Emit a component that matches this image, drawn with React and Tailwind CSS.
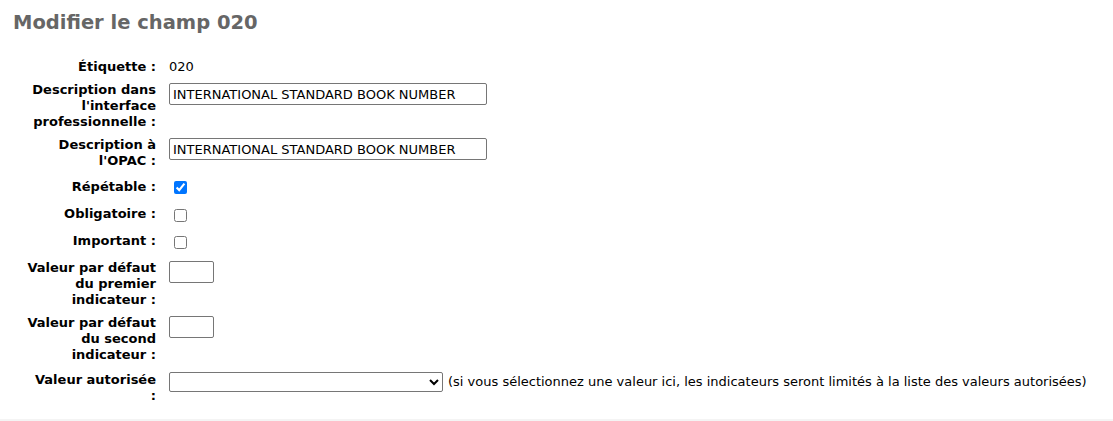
import React from "react";

function Label({ children, className = "" }) {
  return (
    <div className={"w-[130px] shrink-0 text-right font-bold leading-[16px] " + className}>
      {children}
    </div>
  );
}

function TextInput({ value = "", w = "w-[318px]", className = "" }) {
  return (
    <input
      type="text"
      defaultValue={value}
      className={
        "h-[22px] rounded-[2px] border border-[#767676] bg-white px-[3px] text-[13px] leading-[16px] text-black outline-none " +
        w +
        " " +
        className
      }
    />
  );
}

function Check({ checked = false, className = "" }) {
  return (
    <input
      type="checkbox"
      defaultChecked={checked}
      className={"ml-[5px] h-[13px] w-[13px] " + className}
    />
  );
}

export default function App() {
  return (
    <div className="min-h-[421px] bg-white font-['DejaVu_Sans',sans-serif] text-[13px] text-black">
      <h1 className="ml-[13px] pt-[11px] text-[19.5px] font-bold leading-[24px] text-[#666666]">
        Modifier le champ 020
      </h1>

      <div className="flex flex-col pl-[26px]">
        <div className="mt-[24px] flex items-start gap-[13px]">
          <Label>Étiquette :</Label>
          <div className="leading-[16px]">020</div>
        </div>

        <div className="mt-[7px] flex items-start gap-[13px]">
          <Label>
            Description dans l'interface professionnelle :
          </Label>
          <TextInput value="INTERNATIONAL STANDARD BOOK NUMBER" className="mt-[1px]" />
        </div>

        <div className="mt-[7px] flex items-start gap-[13px]">
          <Label>Description à l'OPAC :</Label>
          <TextInput value="INTERNATIONAL STANDARD BOOK NUMBER" className="mt-[1px]" />
        </div>

        <div className="mt-[10px] flex items-start gap-[13px]">
          <Label>Répétable :</Label>
          <Check checked className="mt-[2px]" />
        </div>

        <div className="mt-[11px] flex items-start gap-[13px]">
          <Label>Obligatoire :</Label>
          <Check className="mt-[3px]" />
        </div>

        <div className="mt-[11px] flex items-start gap-[13px]">
          <Label>Important :</Label>
          <Check className="mt-[3px]" />
        </div>

        <div className="mt-[11px] flex items-start gap-[13px]">
          <Label>Valeur par défaut du premier indicateur :</Label>
          <TextInput w="w-[45px]" className="mt-[1px]" />
        </div>

        <div className="mt-[7px] flex items-start gap-[13px]">
          <Label>Valeur par défaut du second indicateur :</Label>
          <TextInput w="w-[45px]" className="mt-[1px]" />
        </div>

        <div className="mt-[9px] flex items-start gap-[13px]">
          <Label>Valeur autorisée :</Label>
          <div className="flex items-center gap-[5px]">
            <select className="h-[20px] w-[274px] rounded-[2px] border border-[#767676] bg-white text-[13px]">
              <option value=""></option>
            </select>
            <span className="leading-[16px]">
              (si vous sélectionnez une valeur ici, les indicateurs seront limités à la liste des valeurs autorisées)
            </span>
          </div>
        </div>
      </div>

      <div className="mt-[15px] h-[2px] bg-[#f4f4f4]" />
    </div>
  );
}
